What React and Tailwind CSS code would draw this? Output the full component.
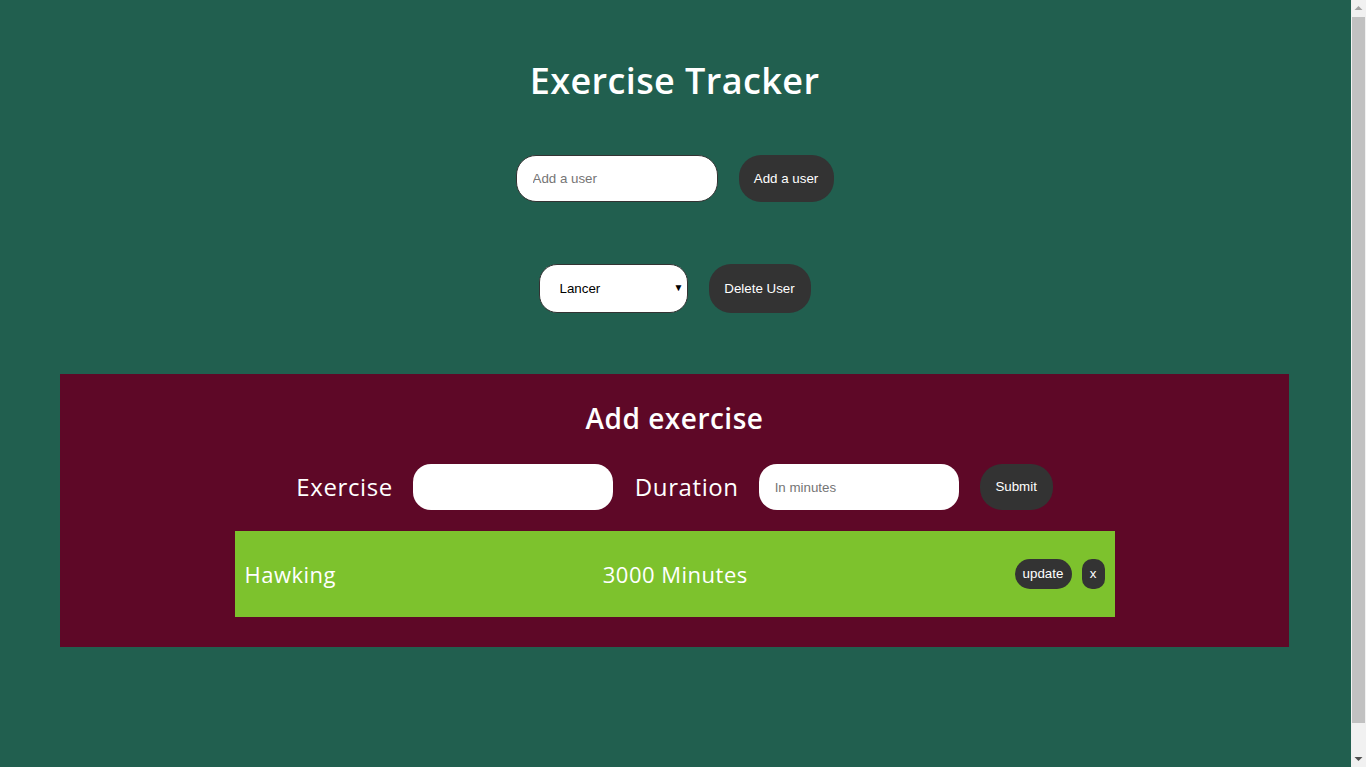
import React, { useState } from "react";

const heading = { fontFamily: '"Open Sans", "DejaVu Sans", sans-serif' };
const arial = { fontFamily: '"Liberation Sans", Arial, sans-serif' };

function Scrollbar() {
  return (
    <div className="flex w-[15px] shrink-0 flex-col items-center bg-[#f1f1f1]">
      <svg width="15" height="17" viewBox="0 0 15 17" className="shrink-0">
        <path d="M3.5 10 L7.5 6 L11.5 10 Z" fill="#a3a3a3" />
      </svg>
      <div className="w-[13px] flex-1 bg-[#c1c1c1]" />
      <svg width="15" height="44" viewBox="0 0 15 44" className="shrink-0">
        <path d="M3.5 34 L7.5 38 L11.5 34 Z" fill="#505050" />
      </svg>
    </div>
  );
}

export default function App() {
  const [users] = useState(["Lancer", "Hawking"]);
  const [user, setUser] = useState("Lancer");

  return (
    <div className="flex h-[767px] overflow-hidden bg-[#215f4f]">
      <div className="flex-1 pr-[2px] pt-[57px]" style={heading}>
        <h1 className="text-center text-[36px] leading-[48px] font-semibold tracking-[0.4px] text-white">
          Exercise Tracker
        </h1>

        {/* add user */}
        <div className="mt-[50px] flex justify-center gap-[21px]">
          <input
            placeholder="Add a user"
            className="h-[47px] w-[202px] rounded-[20px] border border-[#333] bg-white px-4 text-[13.33px] text-black outline-none placeholder:text-[#757575]"
            style={arial}
          />
          <button
            className="h-[47px] w-[95px] rounded-[22px] bg-[#333333] text-[13.33px] text-white"
            style={arial}
          >
            Add a user
          </button>
        </div>

        {/* select user */}
        <div className="mt-[62px] flex justify-center gap-[21px]">
          <div className="relative">
            <select
              value={user}
              onChange={(e) => setUser(e.target.value)}
              className="h-[49px] w-[149px] appearance-none rounded-[18px] border border-[#333] bg-white pl-[20px] text-[13.33px] text-black outline-none"
              style={arial}
            >
              {users.map((u) => (
                <option key={u}>{u}</option>
              ))}
            </select>
            <span
              className="pointer-events-none absolute right-[4px] top-[16px] text-[10px] text-black"
              style={arial}
            >
              ▼
            </span>
          </div>
          <button
            className="h-[49px] w-[102px] rounded-[22px] bg-[#333333] text-[13.33px] text-white"
            style={arial}
          >
            Delete User
          </button>
        </div>

        {/* exercise panel */}
        <div className="mx-auto mt-[61px] w-[1229px] bg-[#5e0827] pt-[24px] pb-[30px]">
          <h2 className="text-center text-[28px] leading-[40px] font-semibold tracking-[0.5px] text-white">
            Add exercise
          </h2>
          <div className="mt-[26px] flex items-center justify-center">
            <label className="text-[24px] tracking-[0.6px] text-white">Exercise</label>
            <input
              className="ml-[20px] h-[46px] w-[200px] rounded-[18px] bg-white px-4 text-[13.33px] outline-none"
              style={arial}
            />
            <label className="ml-[22px] text-[24px] tracking-[0.6px] text-white">Duration</label>
            <input
              placeholder="In minutes"
              className="ml-[20px] h-[46px] w-[200px] rounded-[18px] bg-white px-4 text-[13.33px] outline-none placeholder:text-[#757575]"
              style={arial}
            />
            <button
              className="ml-[21px] h-[46px] w-[73px] rounded-[22px] bg-[#333333] text-[13.33px] text-white"
              style={arial}
            >
              Submit
            </button>
          </div>

          <div className="mx-auto mt-[21px] flex h-[86px] w-[880px] items-center justify-between bg-[#7dc22d] px-[10px]">
            <span className="text-[22px] font-medium tracking-[0.5px] text-white">Hawking</span>
            <span className="text-[22px] font-medium tracking-[0.5px] text-white">3000 Minutes</span>
            <div className="flex items-center gap-[10px]">
              <button
                className="h-[30px] w-[57px] rounded-[15px] bg-[#333333] text-[13.33px] text-white"
                style={arial}
              >
                update
              </button>
              <button
                className="h-[30px] w-[23px] rounded-[10px] bg-[#333333] text-[13.33px] text-white"
                style={arial}
              >
                x
              </button>
            </div>
          </div>
        </div>
      </div>
      <Scrollbar />
    </div>
  );
}
